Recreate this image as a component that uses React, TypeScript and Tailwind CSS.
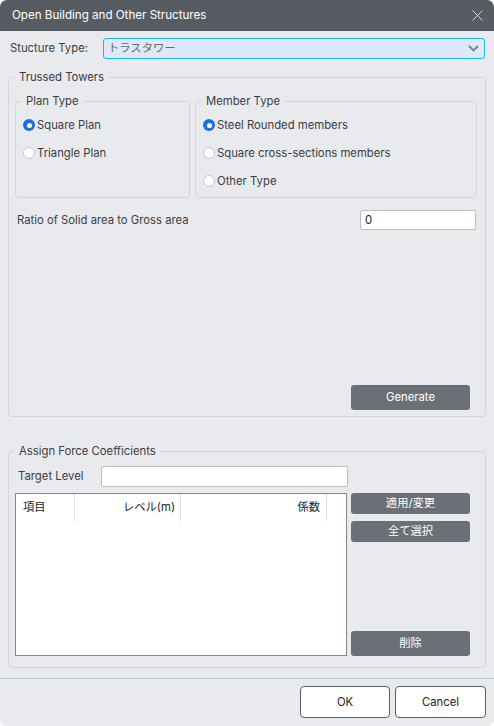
import React from "react";

const font = { fontFamily: 'Inter, "Noto Sans CJK JP", sans-serif' };

function Radio({ label, checked }: { label: string; checked?: boolean }) {
  return (
    <label className="flex h-[20px] items-center gap-[2px] pl-[7px] text-[11.3px] text-[#3a3d42]">
      {checked ? (
        <span className="flex h-[12px] w-[12px] items-center justify-center rounded-full bg-[#1b6fe4]">
          <span className="h-[5px] w-[5px] rounded-full bg-white" />
        </span>
      ) : (
        <span className="h-[12px] w-[12px] rounded-full border border-[#c2c5ca] bg-white" />
      )}
      <span>{label}</span>
    </label>
  );
}

function GrayButton({ children, className }: { children: React.ReactNode; className: string }) {
  return (
    <button
      className={
        "flex w-[119px] items-center justify-center rounded-[3px] bg-[#6b7077] text-[11.3px] text-white " +
        className
      }
    >
      {children}
    </button>
  );
}

const legendCls = "ml-[6px] px-[4px] text-[11.3px] leading-[16px] text-[#3a3d42]";

export default function App() {
  return (
    <div style={font} className="h-[726px] w-[494px] bg-white">
      <div className="flex h-[726px] w-[494px] flex-col overflow-hidden rounded-[7px] bg-[#e9eaee]">
        {/* title bar */}
        <div className="flex h-[31px] shrink-0 items-center justify-between bg-[#575c63] pl-[12px] pr-[11px]">
          <span className="text-[11.6px] text-white">Open Building and Other Structures</span>
          <svg width="11" height="11" viewBox="0 0 11 11">
            <path d="M0.5 0.5L10.5 10.5M10.5 0.5L0.5 10.5" stroke="#e6e7ea" strokeWidth="0.9" />
          </svg>
        </div>

        {/* structure type */}
        <div className="mt-[7px] flex h-[21px] items-center pl-[10px] pr-[9px]">
          <span className="w-[93px] text-[11.3px] text-[#3a3d42]">Stucture Type:</span>
          <div className="flex h-[21px] flex-1 items-center justify-between rounded-[3px] border border-[#19b6f2] bg-[#dde8f8] pl-[4px] pr-[5px]">
            <span className="text-[11.3px] text-[#66696e]">トラスタワー</span>
            <svg width="11" height="7" viewBox="0 0 11 7">
              <path d="M1 1L5.5 5.5L10 1" fill="none" stroke="#7d8187" strokeWidth="1.8" />
            </svg>
          </div>
        </div>

        {/* trussed towers */}
        <fieldset className="mx-[8px] mt-[10px] rounded-[4px] border border-[#d2d5da]">
          <legend className={legendCls}>Trussed Towers</legend>
          <div className="flex h-[331px] flex-col pb-[6px]">
            <div className="mt-[8px] flex gap-[5px] pl-[6px] pr-[8px]">
              <fieldset className="w-[175px] rounded-[4px] border border-[#d2d5da]">
                <legend className={legendCls}>Plan Type</legend>
                <div className="flex flex-col gap-[8px] pt-[6px]">
                  <Radio label="Square Plan" checked />
                  <Radio label="Triangle Plan" />
                </div>
              </fieldset>
              <fieldset className="flex-1 rounded-[4px] border border-[#d2d5da]">
                <legend className={legendCls}>Member Type</legend>
                <div className="flex flex-col gap-[8px] pb-[6px] pt-[6px]">
                  <Radio label="Steel Rounded members" checked />
                  <Radio label="Square cross-sections members" />
                  <Radio label="Other Type" />
                </div>
              </fieldset>
            </div>
            <div className="mt-[12px] flex h-[20px] items-center justify-between pl-[8px] pr-[9px]">
              <span className="text-[11.3px] text-[#3a3d42]">Ratio of Solid area to Gross area</span>
              <div className="flex h-[20px] w-[116px] items-center rounded-[2px] border border-[#b9bdc3] bg-white pl-[4px] text-[11.3px] text-[#222]">
                0
              </div>
            </div>
            <div className="flex flex-1 items-end justify-end pr-[15px]">
              <GrayButton className="h-[25px]">Generate</GrayButton>
            </div>
          </div>
        </fieldset>

        {/* assign force coefficients */}
        <fieldset className="mx-[8px] mt-[26px] rounded-[4px] border border-[#d2d5da]">
          <legend className={legendCls}>Assign Force Coefficients</legend>
          <div className="flex h-[208px] flex-col">
            <div className="mt-[7px] flex h-[21px] items-center pl-[9px]">
              <span className="w-[83px] text-[11.3px] text-[#3a3d42]">Target Level</span>
              <div className="h-[21px] w-[247px] rounded-[2px] border border-[#b9bdc3] bg-white" />
            </div>
            <div className="mt-[6px] flex gap-[4px] pl-[6px]">
              <div className="h-[163px] w-[332px] border border-[#85888d] bg-white">
                <div className="flex h-[27px] text-[11.3px] text-[#222]">
                  <div className="flex w-[59px] items-center border-r border-[#dcdee1] pl-[7px]">項目</div>
                  <div className="flex w-[106px] items-center justify-end border-r border-[#dcdee1] pr-[5px]">レベル(m)</div>
                  <div className="flex w-[146px] items-center justify-end border-r border-[#dcdee1] pr-[6px]">係数</div>
                </div>
              </div>
              <div className="flex h-[163px] flex-col">
                <GrayButton className="h-[21px]">適用/変更</GrayButton>
                <GrayButton className="mt-[7px] h-[21px]">全て選択</GrayButton>
                <div className="flex-1" />
                <GrayButton className="h-[25px]">削除</GrayButton>
              </div>
            </div>
          </div>
        </fieldset>

        {/* footer */}
        <div className="mt-[10px] h-px bg-[#b9c3c7]" />
        <div className="mt-[7px] flex justify-end gap-[5px] pr-[8px]">
          <button className="h-[32px] w-[90px] rounded-[4px] border border-[#5b5f65] bg-white text-[11.3px] text-[#222]">
            OK
          </button>
          <button className="h-[32px] w-[91px] rounded-[4px] border border-[#5b5f65] bg-white text-[11.3px] text-[#222]">
            Cancel
          </button>
        </div>
      </div>
    </div>
  );
}
